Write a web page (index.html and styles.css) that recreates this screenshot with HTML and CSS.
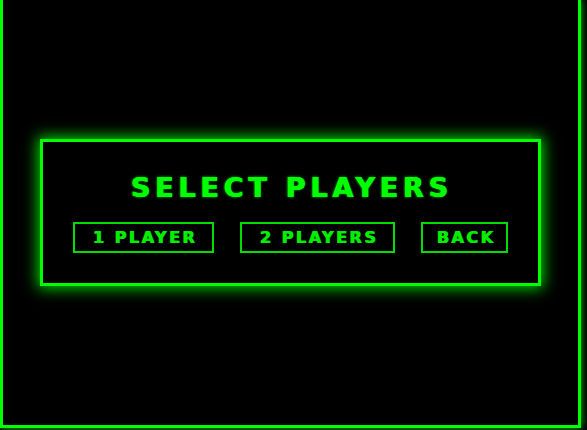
FILE: index.html
```html
<!DOCTYPE html>
<html>
<head>
<meta charset="utf-8">
<link rel="stylesheet" href="styles.css">
</head>
<body>
<div class="frame">
  <div class="panel">
    <h1 class="title">SELECT PLAYERS</h1>
    <div class="buttons">
      <button class="btn btn-one">1 PLAYER</button>
      <button class="btn btn-two">2 PLAYERS</button>
      <button class="btn btn-back">BACK</button>
    </div>
  </div>
</div>
</body>
</html>
```

FILE: styles.css
```css
html, body {
  margin: 0;
  padding: 0;
  background: #000;
  overflow: hidden;
}
body {
  width: 587px;
  height: 430px;
  font-family: "DejaVu Sans", "Liberation Sans", sans-serif;
}
.frame {
  box-sizing: border-box;
  width: 581px;
  height: 428px;
  border: 3px solid #00ff00;
  border-top: 0;
  box-shadow: 0 0 8px #00cc00;
  background: #000;
  display: flex;
  align-items: center;
  justify-content: center;
}
.panel {
  box-sizing: border-box;
  width: 501px;
  height: 147px;
  border: 3px solid #00ff00;
  box-shadow: 0 0 14px 2px #00dd00;
  background: #000;
  display: flex;
  flex-direction: column;
  align-items: center;
  padding-top: 30px;
}
.title {
  margin: 0;
  font-size: 27px;
  line-height: 32px;
  font-weight: bold;
  color: #00ff00;
  letter-spacing: 4.8px;
  padding-left: 2px;
  text-shadow: 1px 0 0 #00ff00, 0 0 3px #00aa00;
}
.buttons {
  display: flex;
  gap: 26px;
  margin-top: 18px;
}
.btn {
  box-sizing: border-box;
  height: 31px;
  margin: 0;
  padding: 0 0 0 2.5px;
  background: #000;
  border: 2px solid #00dd00;
  border-radius: 0;
  color: #00ee00;
  font-family: "DejaVu Sans", "Liberation Sans", sans-serif;
  font-weight: bold;
  font-size: 16px;
  line-height: 27px;
  letter-spacing: 2.5px;
  text-align: center;
  text-shadow: 1px 0 0 #00ee00;
}
.btn-one { width: 141px; }
.btn-two { width: 155px; }
.btn-back { width: 87px; }
```
